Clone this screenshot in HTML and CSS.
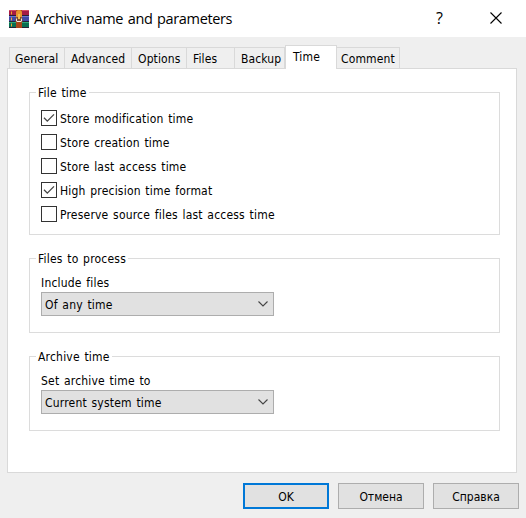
FILE: index.html
```html
<!DOCTYPE html>
<html lang="en">
<head>
<meta charset="utf-8">
<title>Archive name and parameters</title>
<link rel="stylesheet" href="styles.css">
</head>
<body>
<div class="dialog">
  <header class="titlebar">
    <svg class="logo" width="20" height="18" viewBox="0 0 20 18">
      <rect width="20" height="6" rx="1" fill="#a51b45"/><rect width="20" height="1" fill="#d44a64"/>
      <rect y="6" width="20" height="6" fill="#4048a8"/><rect y="6" width="20" height="1" fill="#6d75d0"/>
      <rect y="12" width="20" height="6" rx="1" fill="#087052"/><rect y="12" width="20" height="1" fill="#2da878"/>
      <path d="M0 5.5h20M0 11.5h20M0 17.5h20" stroke="#252035"/>
      <path d="M2.5 1.5v3M2.5 7.5v3M2.5 13.5v3" stroke="#f0a52b"/>
      <rect x="7" width="6" height="18" fill="#a84618"/>
      <path d="M7 3q0-3 3-3t3 3v5H7z" fill="#e8952e"/>
      <path d="M6.5 12V9q0-2 1.500-2h4q1.500 0 1.500 2v3z" fill="#7b4a30"/>
      <path d="M7.500 11.500V8.500M12.500 11.500V8.500" stroke="#eee6dc"/>
      <rect x="9" y="4" width="2" height="5" fill="#f4c04e"/>
      <path d="M8 11.500h4" stroke="#f2eee8"/>
    </svg>
    <h1 class="title">Archive name and parameters</h1>
    <span class="help">?</span>
    <svg class="close" width="12" height="12" viewBox="0 0 12 12"><path d="M.5.5l11 11M11.500.5l-11 11" stroke="#000" stroke-width="1.100" fill="none"/></svg>
  </header>
  <nav class="tabs">
    <span class="tab general">General</span><span class="tab advanced">Advanced</span><span class="tab options">Options</span><span class="tab files">Files</span><span class="tab backup">Backup</span><span class="tab time">Time</span><span class="tab comment">Comment</span>
  </nav>
  <main class="panel">
    <section class="group checks">
      <h2 class="legend">File time</h2>
      <div class="check"><span class="box"><svg width="14" height="14" viewBox="0 0 14 14"><path class="tick" d="M2 6.800L5.300 10.100L12 3.400"/></svg></span><span class="text">Store modification time</span></div>
      <div class="check"><span class="box"></span><span class="text">Store creation time</span></div>
      <div class="check"><span class="box"></span><span class="text">Store last access time</span></div>
      <div class="check"><span class="box"><svg width="14" height="14" viewBox="0 0 14 14"><path class="tick" d="M2 6.800L5.300 10.100L12 3.400"/></svg></span><span class="text">High precision time format</span></div>
      <div class="check"><span class="box"></span><span class="text">Preserve source files last access time</span></div>
    </section>
    <section class="group process">
      <h2 class="legend">Files to process</h2>
      <div class="label">Include files</div>
      <div class="select"><span class="text">Of any time</span><svg width="10" height="6" viewBox="0 0 10 6"><path class="arrow" d="M.5.5L5 5L9.500.5"/></svg></div>
    </section>
    <section class="group archive">
      <h2 class="legend">Archive time</h2>
      <div class="label">Set archive time to</div>
      <div class="select"><span class="text">Current system time</span><svg width="10" height="6" viewBox="0 0 10 6"><path class="arrow" d="M.5.5L5 5L9.500.5"/></svg></div>
    </section>
  </main>
  <footer class="buttons">
    <div class="button default">OK</div><div class="button">Отмена</div><div class="button">Справка</div>
  </footer>
</div>
</body>
</html>
```
FILE: styles.css
```css
* { box-sizing: border-box; }
body { margin: 0; }
.dialog {
  width: 526px; height: 518px; background: #efefef; color: #000;
  font: 12px/16px "DejaVu Sans Condensed", "DejaVu Sans", sans-serif;
  font-stretch: condensed;
  white-space: nowrap; overflow: hidden;
}
svg { display: block; flex: none; }
.titlebar { display: flex; align-items: center; height: 37px; background: #fff; padding: 0 24px 0 9px; }
.title { margin: 0 0 0 5px; font: 400 14.5px/20px "Open Sans", sans-serif; letter-spacing: -.36px; word-spacing: 1.2px; }
.help { margin: -1px 0 0 auto; font: 16px/20px "Open Sans", sans-serif; }
.close { margin: -1px 0 0 47px; }
.tabs { display: flex; align-items: flex-end; height: 31px; padding-left: 9px; letter-spacing: .13px; }
.tab { height: 21px; border: 1px solid #d9d9d9; border-width: 1px 1px 0 0; padding: 3px 0 0 6px; line-height: 16px; }
.general { width: 56px; border-left-width: 1px; padding-left: 5px; }
.advanced { width: 67px; }
.options { width: 55px; }
.files { width: 48px; }
.backup { width: 50px; }
.time { width: 52px; height: 24px; margin: 0 0 -1px 0; border-left-width: 1px; background: #fff; padding-left: 7px; z-index: 1; }
.comment { width: 63px; padding-left: 4px; }
.panel { width: 510px; height: 405px; margin-left: 7px; border: 1px solid #d9d9d9; background: #fff; padding: 23px 16px 0 21px; letter-spacing: .2px; word-spacing: 1px; }
.group { width: 471px; border: 1px solid #dcdcdc; padding-left: 11px; }
.legend { width: max-content; margin: -8px 0 0 -5px; padding: 0 2px; background: #fff; font: inherit; }
.checks { height: 143px; }
.check { display: flex; align-items: center; gap: 3px; height: 16px; margin-bottom: 8px; }
.legend + .check { margin-top: 9px; }
.text { padding-top: 2px; }
.box { width: 16px; height: 16px; border: 1px solid #333; background: #fff; }
.tick, .arrow { fill: none; stroke: #444; stroke-width: 1.300; }
.arrow { stroke-width: 1.100; }
.process { height: 75px; margin-top: 23px; }
.archive { height: 75px; margin-top: 23px; }
.label { margin-top: 8px; }
.select { display: flex; align-items: center; justify-content: space-between; width: 233px; height: 24px; margin-top: 1px; border: 1px solid #adadad; background: #e1e1e1; padding: 0 5px 0 3px; }
.buttons { display: flex; justify-content: flex-end; gap: 9px; padding: 10px 7px 0 0; }
.button { width: 86px; height: 26px; border: 1px solid #adadad; background: #e1e1e1; text-align: center; line-height: 26px; }
.default { border: 2px solid #0078d7; line-height: 24px; }
```
